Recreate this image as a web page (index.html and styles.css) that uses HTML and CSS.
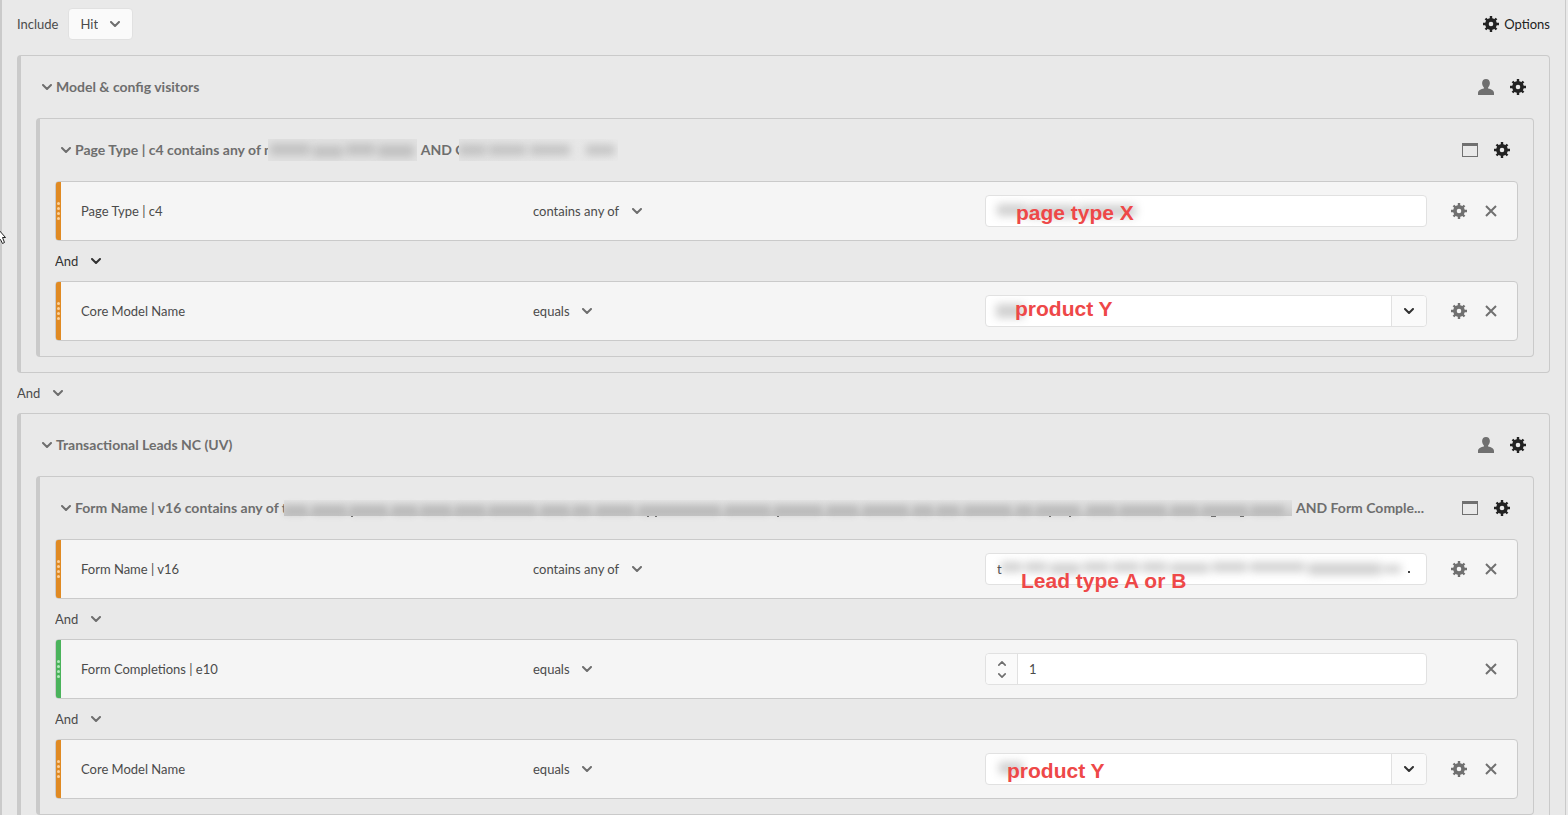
FILE: index.html
```html
<!DOCTYPE html>
<html lang="en">

<head>
    <meta charset="UTF-8">
    <meta name="viewport" content="width=device-width, initial-scale=1.0">
    <title>Segment Builder</title>
    <link rel="stylesheet" href="styles.css">
</head>

<body>
    <!-- Shared icons -->
    <svg class="sprite" aria-hidden="true">
        <symbol id="chevron" viewBox="0 0 10 6">
            <path d="M1 1l4 4 4-4" fill="none" stroke="currentColor" stroke-width="2" stroke-linecap="round" stroke-linejoin="round" />
        </symbol>
        <symbol id="gear" viewBox="0 0 16 16">
            <circle cx="8" cy="8" r="4.1" fill="none" stroke="currentColor" stroke-width="3.6" />
            <path d="M8 0v3M8 13v3M0 8h3M13 8h3M2.5 2.5l2 2M11.5 11.5l2 2M13.5 2.5l-2 2M4.5 11.5l-2 2" stroke="currentColor" stroke-width="2.4" />
        </symbol>
        <symbol id="user" viewBox="0 0 16 16">
            <path d="M8 0C5.6 0 4.1 1.6 4.1 4.1c0 1.8.7 3.3 1.8 4.3v1.2C3 10 0 11.600 0 14v2h16v-2c0-2.400-3-4-5.900-4.400V8.400c1.100-1 1.800-2.500 1.800-4.300C11.900 1.600 10.400 0 8 0z" fill="currentColor" />
        </symbol>
        <symbol id="window" viewBox="0 0 16 14">
            <path d="M0 0h16v14H0zM1 3v10h14V3z" fill="currentColor" fill-rule="evenodd" />
        </symbol>
        <symbol id="cross" viewBox="0 0 12 12">
            <path d="M1 1l10 10M11 1L1 11" stroke="currentColor" stroke-width="2" />
        </symbol>
    </svg>

    <svg class="cursor" width="7" height="15" viewBox="0 0 7 15" aria-hidden="true">
        <path d="M-2 -1L5.500 7.500H2.500L4.500 12.500 2.500 13.500 .5 9.500-2 11z" fill="#fff" stroke="#222" />
    </svg>

    <main class="panel">
        <div class="toolbar">
            <label for="include">Include</label>
            <span class="picker picker-box">
                <select id="include"><option>Hit</option></select>
                <svg class="chevron"><use href="#chevron" /></svg>
            </span>
            <button class="options"><svg class="icon"><use href="#gear" /></svg>Options</button>
        </div>

        <section class="group">
            <header class="group-header">
                <button class="toggle" aria-label="Collapse group"><svg class="chevron"><use href="#chevron" /></svg></button>
                <h2 class="title">Model &amp; config visitors</h2>
                <button class="icon-button" aria-label="Visitor"><svg class="icon"><use href="#user" /></svg></button>
                <button class="icon-button dark" aria-label="Group options"><svg class="icon"><use href="#gear" /></svg></button>
            </header>

            <section class="group">
                <header class="group-header">
                    <button class="toggle" aria-label="Collapse group"><svg class="chevron"><use href="#chevron" /></svg></button>
                    <h3 class="title">
                        <span>Page Type | c4 contains any of m</span>
                        <svg class="redacted page-value" aria-hidden="true">
                            <rect class="smudge" x="2" y="5" width="40" height="11" />
                            <rect class="smudge" x="45" y="7" width="30" height="11" />
                            <rect class="smudge" x="78" y="5" width="29" height="11" />
                            <rect class="smudge" x="110" y="6" width="36" height="12" />
                        </svg>
                        <span>AND C</span>
                        <svg class="redacted model-value" aria-hidden="true">
                            <rect class="smudge" x="0" y="6" width="27" height="10" />
                            <rect class="smudge" x="30" y="6" width="37" height="10" />
                            <rect class="smudge" x="71" y="6" width="40" height="10" />
                            <rect class="smudge" x="127" y="6" width="29" height="10" />
                        </svg>
                    </h3>
                    <button class="icon-button" aria-label="Page view"><svg class="icon window"><use href="#window" /></svg></button>
                    <button class="icon-button dark" aria-label="Group options"><svg class="icon"><use href="#gear" /></svg></button>
                </header>

                <div class="rule">
                    <span class="handle"><i></i><i></i><i></i><i></i></span>
                    <div class="fields">
                        <label for="page-type">Page Type | c4</label>
                        <span class="picker">
                            <select aria-label="Operator"><option>contains any of</option></select>
                            <svg class="chevron"><use href="#chevron" /></svg>
                        </span>
                        <div class="value">
                            <input id="page-type" type="text">
                            <svg class="smudges" aria-hidden="true">
                                <rect class="smudge" x="11" y="8" width="30" height="12" />
                                <rect class="smudge" x="42" y="9" width="48" height="13" />
                                <rect class="smudge" x="92" y="9" width="58" height="12" />
                            </svg>
                            <span class="note note-page">page type X</span>
                        </div>
                    </div>
                    <button class="icon-button" aria-label="Rule options"><svg class="icon"><use href="#gear" /></svg></button>
                    <button class="icon-button" aria-label="Remove"><svg class="icon cross"><use href="#cross" /></svg></button>
                </div>

                <div class="joiner active">
                    <span class="picker">
                        <select aria-label="Join rules"><option>And</option></select>
                        <svg class="chevron"><use href="#chevron" /></svg>
                    </span>
                </div>

                <div class="rule">
                    <span class="handle"><i></i><i></i><i></i><i></i></span>
                    <div class="fields">
                        <label for="model-1">Core Model Name</label>
                        <span class="picker">
                            <select aria-label="Operator"><option>equals</option></select>
                            <svg class="chevron"><use href="#chevron" /></svg>
                        </span>
                        <div class="value">
                            <input id="model-1" type="text">
                            <button class="drop" aria-label="Show values"><svg class="chevron"><use href="#chevron" /></svg></button>
                            <svg class="smudges" aria-hidden="true"><rect class="smudge" x="10" y="8" width="28" height="14" /></svg>
                            <span class="note note-model">product Y</span>
                        </div>
                    </div>
                    <button class="icon-button" aria-label="Rule options"><svg class="icon"><use href="#gear" /></svg></button>
                    <button class="icon-button" aria-label="Remove"><svg class="icon cross"><use href="#cross" /></svg></button>
                </div>
            </section>
        </section>

        <div class="joiner">
            <span class="picker">
                <select aria-label="Join groups"><option>And</option></select>
                <svg class="chevron"><use href="#chevron" /></svg>
            </span>
        </div>

        <section class="group">
            <header class="group-header">
                <button class="toggle" aria-label="Collapse group"><svg class="chevron"><use href="#chevron" /></svg></button>
                <h2 class="title">Transactional Leads NC (UV)</h2>
                <button class="icon-button" aria-label="Visitor"><svg class="icon"><use href="#user" /></svg></button>
                <button class="icon-button dark" aria-label="Group options"><svg class="icon"><use href="#gear" /></svg></button>
            </header>

            <section class="group">
                <header class="group-header">
                    <button class="toggle" aria-label="Collapse group"><svg class="chevron"><use href="#chevron" /></svg></button>
                    <h3 class="title">
                        <span>Form Name | v16 contains any of t</span>
                        <svg class="redacted form-value" aria-hidden="true">
                            <g class="smudge">
                                <path d="M0 5h23v10H0zM28 5h34v10H28zM66 5h37v10H66zM108 5h25v10h-25zM137 5h30v10h-30zM171 5h30v10h-30zM205 5h47v10h-47zM257 5h28v10h-28zM289 5h18v10h-18zM312 5h38v10h-38zM355 5h81v10h-81zM441 5h45v10h-45zM490 5h48v10h-48zM543 5h31v10h-31zM579 5h45v10h-45z" />
                                <path d="M629 5h20v10h-20zM653 5h22v10h-22zM680 5h47v10h-47zM732 5h16v10h-16zM752 5h43v10h-43zM803 5h29v10h-29zM836 5h46v10h-46zM887 5h27v10h-27zM918 5h45v10h-45zM967 5h33v10h-33z" />
                            </g>
                            <path class="tails" d="M67 16h2v1h-2zM363 16h2v1h-2zM371 16h2v1h-2zM493 16h2v1h-2zM765 16h2v1h-2zM785 16h2v1h-2zM927 16h5v1h-5zM956 16h4v1h-4z" />
                        </svg>
                        <span>AND Form Comple...</span>
                    </h3>
                    <button class="icon-button" aria-label="Page view"><svg class="icon window"><use href="#window" /></svg></button>
                    <button class="icon-button dark" aria-label="Group options"><svg class="icon"><use href="#gear" /></svg></button>
                </header>

                <div class="rule">
                    <span class="handle"><i></i><i></i><i></i><i></i></span>
                    <div class="fields">
                        <label for="form-name">Form Name | v16</label>
                        <span class="picker">
                            <select aria-label="Operator"><option>contains any of</option></select>
                            <svg class="chevron"><use href="#chevron" /></svg>
                        </span>
                        <div class="value">
                            <input id="form-name" type="text" value="t">
                            <svg class="smudges" aria-hidden="true">
                                <path class="smudge" d="M15 8h21v10H15zM39 8h22v10H39zM64 9h30v11H64zM97 8h26v10H97zM126 8h27v10h-27zM156 8h25v10h-25zM184 9h39v10h-39zM226 8h35v10h-35zM264 8h55v10h-55zM322 9h73v12h-73zM397 11h18v8h-18z" />
                                <circle cx="423" cy="18" r="1" />
                            </svg>
                            <span class="note note-lead">Lead type A or B</span>
                        </div>
                    </div>
                    <button class="icon-button" aria-label="Rule options"><svg class="icon"><use href="#gear" /></svg></button>
                    <button class="icon-button" aria-label="Remove"><svg class="icon cross"><use href="#cross" /></svg></button>
                </div>

                <div class="joiner">
                    <span class="picker">
                        <select aria-label="Join rules"><option>And</option></select>
                        <svg class="chevron"><use href="#chevron" /></svg>
                    </span>
                </div>

                <div class="rule metric">
                    <span class="handle"><i></i><i></i><i></i><i></i></span>
                    <div class="fields">
                        <label for="completions">Form Completions | e10</label>
                        <span class="picker">
                            <select aria-label="Operator"><option>equals</option></select>
                            <svg class="chevron"><use href="#chevron" /></svg>
                        </span>
                        <div class="value">
                            <div class="stepper">
                                <button aria-label="Increase"><svg class="chevron up"><use href="#chevron" /></svg></button>
                                <button aria-label="Decrease"><svg class="chevron"><use href="#chevron" /></svg></button>
                            </div>
                            <input id="completions" type="number" value="1">
                        </div>
                    </div>
                    <span class="icon-button"></span>
                    <button class="icon-button" aria-label="Remove"><svg class="icon cross"><use href="#cross" /></svg></button>
                </div>

                <div class="joiner">
                    <span class="picker">
                        <select aria-label="Join rules"><option>And</option></select>
                        <svg class="chevron"><use href="#chevron" /></svg>
                    </span>
                </div>

                <div class="rule">
                    <span class="handle"><i></i><i></i><i></i><i></i></span>
                    <div class="fields">
                        <label for="model-2">Core Model Name</label>
                        <span class="picker">
                            <select aria-label="Operator"><option>equals</option></select>
                            <svg class="chevron"><use href="#chevron" /></svg>
                        </span>
                        <div class="value">
                            <input id="model-2" type="text">
                            <button class="drop" aria-label="Show values"><svg class="chevron"><use href="#chevron" /></svg></button>
                            <svg class="smudges" aria-hidden="true"><rect class="smudge" x="13" y="8" width="24" height="12" /></svg>
                            <span class="note note-model-last">product Y</span>
                        </div>
                    </div>
                    <button class="icon-button" aria-label="Rule options"><svg class="icon"><use href="#gear" /></svg></button>
                    <button class="icon-button" aria-label="Remove"><svg class="icon cross"><use href="#cross" /></svg></button>
                </div>
            </section>
        </section>
    </main>
</body>

</html>
```

FILE: styles.css
```css
* {
    box-sizing: border-box;
}

body {
    margin: 0;
    background-color: #e9e9e9;
    color: #4b4b4b;
    font-family: Lato, "Open Sans", sans-serif;
    font-size: 13px;
    line-height: 20px;
}

button,
input,
select {
    margin: 0;
    padding: 0;
    border: none;
    background: none;
    color: inherit;
    font: inherit;
}

button,
select {
    cursor: pointer;
}

.sprite {
    display: none;
}

.panel {
    height: 100vh;
    margin-right: 2px;
    padding: 8px 15px 16px;
    border-left: 2px solid #cacaca;
    border-right: 1px solid #cacaca;
    overflow-y: auto;
    scrollbar-width: none;
}

.cursor {
    position: absolute;
    left: 0;
    top: 230px;
}

/* Icons */
.icon {
    display: block;
    width: 16px;
    height: 16px;
}

.icon.window {
    height: 14px;
}

.icon.cross {
    width: 12px;
    height: 12px;
}

.chevron {
    display: block;
    width: 10px;
    height: 6px;
    color: #6e6e6e;
}

.icon-button {
    display: flex;
    flex: none;
    align-items: center;
    justify-content: center;
    width: 32px;
    height: 32px;
    color: #707070;
}

.dark {
    color: #222;
}

/* Top row */
.toolbar {
    display: flex;
    align-items: center;
    gap: 10px;
    margin-bottom: 15px;
}

.options {
    display: flex;
    align-items: center;
    gap: 5px;
    margin-left: auto;
    color: #222;
}

/* Drop-downs */
.picker {
    display: inline-flex;
    position: relative;
    align-items: center;
    justify-self: start;
}

.picker select {
    appearance: none;
    padding-right: 22px;
}

.picker .chevron {
    position: absolute;
    right: 0;
    pointer-events: none;
}

.picker-box select {
    height: 32px;
    padding: 0 34px 0 11px;
    border: 1px solid #e1e1e1;
    border-radius: 4px;
    background-color: #fafafa;
}

.picker-box .chevron {
    right: 13px;
}

/* Groups */
.group {
    padding: 0 15px 15px;
    border: 1px solid #cacaca;
    border-left-width: 4px;
    border-radius: 4px;
}

.group-header {
    display: flex;
    align-items: center;
    height: 62px;
    color: #6e6e6e;
}

.toggle {
    padding: 6px 4px 6px 6px;
}

.title {
    display: flex;
    flex: 1;
    align-items: center;
    min-width: 0;
    margin: 0 30px 0 0;
    font-size: 14px;
    font-weight: 700;
    white-space: nowrap;
}

.joiner {
    display: flex;
    align-items: center;
    height: 40px;
}

.joiner.active,
.joiner.active .chevron {
    color: #323232;
}

/* Rules */
.rule {
    display: flex;
    align-items: center;
    height: 60px;
    padding-right: 10px;
    border: 1px solid #cacaca;
    border-radius: 4px;
    background-color: #f5f5f5;
}

.handle {
    display: flex;
    flex-direction: column;
    align-items: center;
    align-self: stretch;
    justify-content: center;
    gap: 2px;
    width: 5px;
    border-radius: 2px 0 0 2px;
    background-color: #e08a23;
}

.handle i {
    width: 3px;
    height: 3px;
    border-radius: 50%;
    background-color: #fbd09a;
}

.metric .handle {
    background-color: #4ab35b;
}

.metric .handle i {
    background-color: #b4e8bc;
}

.fields {
    display: grid;
    flex: 1;
    grid-template-columns: repeat(3, 1fr);
    align-items: center;
    gap: 10px;
    margin: 0 16px 0 20px;
}

.value {
    display: flex;
    position: relative;
    height: 32px;
    border: 1px solid #e1e1e1;
    border-radius: 4px;
    background-color: #fff;
}

.value input {
    flex: 1;
    min-width: 0;
    padding: 0 11px;
    appearance: textfield;
}

.value input::-webkit-inner-spin-button {
    display: none;
}

.drop {
    display: flex;
    align-items: center;
    justify-content: center;
    width: 35px;
    border-left: 1px solid #e1e1e1;
    border-radius: 0 4px 4px 0;
    background-color: #fafafa;
}

.drop .chevron {
    color: #323232;
}

.stepper {
    display: flex;
    flex-direction: column;
    justify-content: center;
    gap: 7px;
    width: 32px;
    border-right: 1px solid #e1e1e1;
    border-radius: 4px 0 0 4px;
    background-color: #fafafa;
}

.stepper button {
    display: flex;
    justify-content: center;
}

.stepper .chevron {
    width: 8px;
    height: 5px;
}

.chevron.up {
    transform: rotate(180deg);
}

/* Hidden values */
.smudge {
    fill: #8c8c8c;
    opacity: 0.4;
    filter: blur(4px);
}

.redacted {
    flex: none;
    height: 22px;
    margin: 0 4px 0 -8px;
    background-color: #e2e2e2;
}

.page-value {
    width: 149px;
}

.model-value {
    width: 159px;
    margin-left: -6px;
    background: linear-gradient(90deg, #e2e2e2, #e9e9e9);
}

.form-value {
    flex: 1;
    min-width: 0;
    height: 16px;
    margin-left: -3px;
    background: linear-gradient(#e2e2e2, #c8c8c8);
    overflow: visible;
}

.form-value .smudge {
    filter: blur(3px);
    opacity: 0.3;
}

.tails {
    fill: #6e6e6e;
}

.smudges {
    position: absolute;
    left: 0;
    top: 0;
    width: 100%;
    height: 100%;
    pointer-events: none;
}

/* Notes over the fields */
.note {
    position: absolute;
    color: #ee4848;
    font: 700 21px/24px "Liberation Sans", Arial, sans-serif;
    white-space: nowrap;
}

.note-page {
    left: 30px;
    top: 5px;
}

.note-model {
    left: 29px;
    top: 1px;
}

.note-lead {
    left: 35px;
    top: 15px;
}

.note-model-last {
    left: 21px;
    top: 5px;
}
```
